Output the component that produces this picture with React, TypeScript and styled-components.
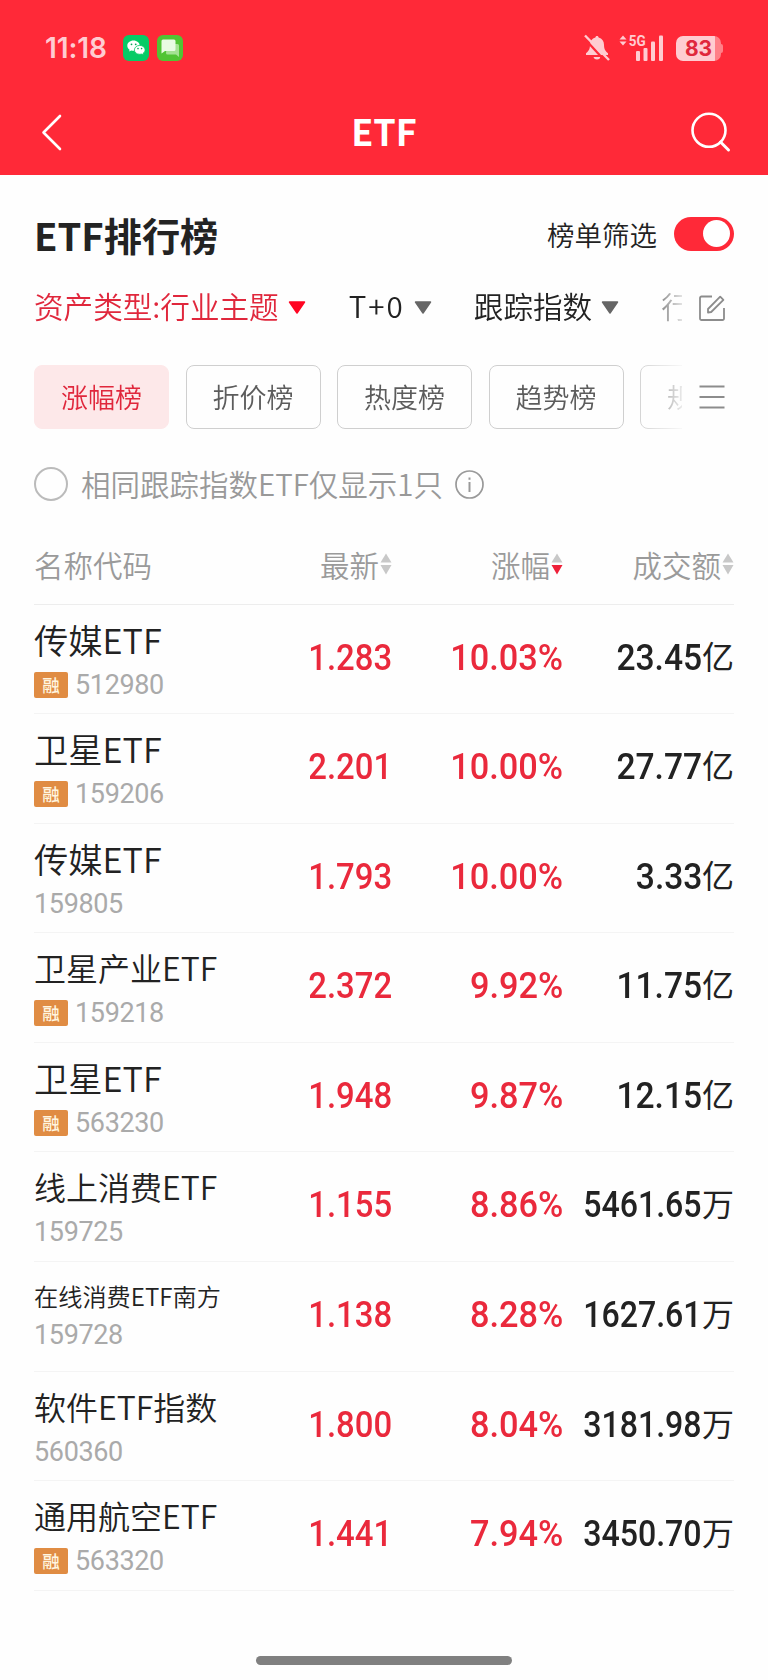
import React from "react";
import styled, { createGlobalStyle } from "styled-components";

const Global = createGlobalStyle`
  * { box-sizing: border-box; }
  body {
    margin: 0;
    background: #fefefe;
    font-family: "Noto Sans CJK SC", "Noto Sans", sans-serif;
    font-weight: 350;
    -webkit-font-smoothing: antialiased;
  }
`;

const Page = styled.div`
  width: 768px;
  height: 1680px;
  display: flex;
  flex-direction: column;
  overflow: hidden;
  background: #fefefe;
`;

const Header = styled.header`
  height: 174.5px;
  flex: none;
  background: #ff2938;
  color: #fff;
`;

const StatusBar = styled.div`
  height: 96px;
  padding: 0 45px 0 45px;
  display: flex;
  align-items: center;
  color: #ffccd1;
`;

const Clock = styled.span`
  font: 600 28px/30px Inter, sans-serif;
  letter-spacing: -0.1px;
  width: 78px;
`;

const AppIcons = styled.div`
  display: flex;
  gap: 8px;
  flex: 1;
`;

const StatusRight = styled.div`
  display: flex;
  align-items: center;
`;

const Battery = styled.div`
  display: flex;
  align-items: center;
  margin-left: 11px;
`;

const BatteryBody = styled.div`
  width: 45px;
  height: 25px;
  border-radius: 7px;
  background: linear-gradient(90deg, #ffccd1 0 39px, #ff8088 39px);
  color: #e0283c;
  font: 700 21px/26px Inter, sans-serif;
  text-align: center;
`;

const BatteryTip = styled.div`
  width: 2px;
  height: 9px;
  border-radius: 0 2px 2px 0;
  background: #ff8088;
`;

const NavBar = styled.div`
  height: 72px;
  padding: 0 37px 0 40px;
  display: flex;
  align-items: center;
  justify-content: space-between;
`;

const NavTitle = styled.h1`
  margin: 0;
  padding: 0 3px 4px 0;
  font-size: 36px;
  line-height: 40px;
  font-weight: 700;
`;

const NavSlot = styled.div<{ $end?: boolean }>`
  width: 60px;
  display: flex;
  justify-content: ${(p) => (p.$end ? "flex-end" : "flex-start")};
`;

const Main = styled.main`
  padding: 0 34px;
`;

const TitleRow = styled.div`
  height: 88px;
  padding-top: 32px;
  display: flex;
  align-items: center;
  justify-content: space-between;
`;

const Title = styled.h2`
  margin: 0;
  font-size: 38.2px;
  line-height: 50px;
  font-weight: 700;
  color: #232323;
`;

const ToggleLabel = styled.label`
  display: flex;
  align-items: center;
  gap: 17px;
  margin-bottom: 2px;
  font-size: 27.5px;
  line-height: 32px;
  color: #222;
`;

const Toggle = styled.span`
  width: 60px;
  height: 34px;
  padding: 3px 4px;
  border-radius: 17px;
  background: #ff2938;
  display: flex;
  justify-content: flex-end;
`;

const Knob = styled.span`
  width: 27px;
  height: 27px;
  border-radius: 50%;
  background: #fff;
`;

const ScrollRow = styled.div<{ $h: number }>`
  height: ${(p) => p.$h}px;
  display: flex;
  align-items: center;
  padding-right: 9px;
`;

const Scroller = styled.div`
  width: 648px;
  height: 68px;
  display: flex;
  align-items: center;
  overflow: hidden;
  mask-image: linear-gradient(90deg, #000 600px, transparent 655px);
`;

const RowAction = styled.div`
  flex: 1;
  display: flex;
  justify-content: flex-end;
`;

const Filter = styled.span<{ $active?: boolean; $gap: number; $spacing?: number }>`
  flex: none;
  display: flex;
  align-items: center;
  gap: 9px;
  margin-right: ${(p) => p.$gap}px;
  font-size: 29.6px;
  line-height: 44px;
  letter-spacing: ${(p) => p.$spacing ?? 0}px;
  color: ${(p) => (p.$active ? "#e0273c" : "#222")};
`;

const FilterText = styled.span`
  margin-top: -3px;
`;

const Tab = styled.span<{ $active?: boolean }>`
  flex: none;
  width: 135px;
  height: 64px;
  margin-right: 16.5px;
  border-radius: 8px;
  border: 1px solid ${(p) => (p.$active ? "#fde8e9" : "#cfcfcf")};
  background: ${(p) => (p.$active ? "#fde8e9" : "transparent")};
  color: ${(p) => (p.$active ? "#e0273c" : "#5c5c5c")};
  font-size: 27px;
  line-height: 62px;
  text-align: center;
`;

const OptionRow = styled.div`
  height: 87px;
  display: flex;
  align-items: center;
  color: #999;
  font-size: 29.5px;
  line-height: 40px;
`;

const Radio = styled.span`
  width: 34px;
  height: 34px;
  border: 2px solid #bbb;
  border-radius: 50%;
  margin-right: 13px;
`;

const OptionText = styled.span`
  margin: -3px 12px 0 0;
`;

const columns = "grid-template-columns: 200px 158px 171px 171px;";

const TableHead = styled.div`
  height: 77.2px;
  display: grid;
  ${columns}
  align-items: center;
  font-size: 29.5px;
  line-height: 40px;
  color: #9a9a9a;
  padding-bottom: 3px;
  border-bottom: 1px solid #ededed;
`;

const HeadCell = styled.div<{ $right?: boolean }>`
  display: flex;
  align-items: center;
  gap: 1px;
  justify-content: ${(p) => (p.$right ? "flex-end" : "flex-start")};
`;

const Row = styled.div`
  height: 109.55px;
  display: grid;
  ${columns}
  border-bottom: 1px solid #f4f4f4;
`;

const NameCell = styled.div`
  padding-top: 13px;
  white-space: nowrap;
`;

const Name = styled.div<{ $size: number }>`
  font-size: ${(p) => p.$size}px;
  line-height: 42px;
  color: #222;
`;

const CodeLine = styled.div<{ $up?: boolean }>`
  display: flex;
  align-items: center;
  gap: 7px;
  height: 26px;
  margin-top: ${(p) => (p.$up ? 5 : 12)}px;
`;

const Badge = styled.span`
  width: 34px;
  height: 26px;
  border-radius: 2px;
  background: #e08c43;
  color: #fff6e0;
  font-size: 17.5px;
  line-height: 25px;
  font-weight: 500;
  text-align: center;
`;

const Code = styled.span`
  font: 400 27px/26px Roboto, sans-serif;
  letter-spacing: -0.35px;
  color: #aaa;
`;

const Num = styled.div<{ $dark?: boolean; $scale: number }>`
  display: flex;
  align-items: center;
  justify-content: flex-end;
  height: 106px;
  white-space: nowrap;
  color: ${(p) => (p.$dark ? "#222" : "#ea293c")};
  font: 460 36.5px/40px Roboto, sans-serif;

  span {
    transform: scaleX(${(p) => p.$scale});
    transform-origin: right center;
  }
`;

const Unit = styled.b`
  margin-top: -6px;
  font: 400 32px/40px "Noto Sans CJK SC", sans-serif;
`;

const HomeIndicator = styled.div`
  width: 256px;
  height: 9px;
  margin: auto auto 15px;
  border-radius: 5px;
  background: #808080;
`;

const Caret = ({ color }: { color: string }) => (
  <svg width="18" height="14" viewBox="0 0 18 14">
    <path d="M1.5 1h15L9 12z" fill={color} stroke={color} strokeWidth="1.5" strokeLinejoin="round" />
  </svg>
);

const Sort = ({ desc }: { desc?: boolean }) => (
  <svg width="12" height="22" viewBox="0 0 12 22">
    <path d="M6 .5l5.5 9H.5z" fill="#c8c8c8" />
    <path d="M6 21.5l5.5-9.5H.5z" fill={desc ? "#ee2039" : "#c8c8c8"} />
  </svg>
);

const WeChat = () => (
  <svg width="26" height="26" viewBox="0 0 26 26">
    <rect width="26" height="26" rx="6" fill="#06cb66" />
    <path d="M10.5 5.6C7 5.600 4.300 7.900 4.300 10.700c0 1.600.9 3 2.300 4l-.5 1.900 2.100-1.100c.7.2 1.500.3 2.300.3 3.500 0 6.200-2.300 6.200-5.100s-2.700-5.100-6.200-5.100z" fill="#fff" />
    <path d="M16.800 10.400c-3.100 0-5.400 2-5.400 4.500s2.300 4.400 5.400 4.400c.6 0 1.200-.1 1.800-.2l1.900 1-.5-1.700c1.300-.8 2.100-2.100 2.100-3.500 0-2.500-2.400-4.500-5.300-4.500z" fill="#fff" stroke="#06cb66" strokeWidth=".8" />
    <g fill="#06a757">
      <circle cx="8.500" cy="9.300" r=".9" />
      <circle cx="12.700" cy="9.300" r=".9" />
      <circle cx="15" cy="13.600" r=".8" />
      <circle cx="18.600" cy="13.600" r=".8" />
    </g>
  </svg>
);

const Messages = () => (
  <svg width="26" height="26" viewBox="0 0 26 26">
    <rect width="26" height="26" rx="6" fill="#51c434" />
    <path d="M10 9h10.500q1.500 0 1.500 1.500V22l-3-2.500h-8.500Q9 19.500 9 18z" fill="#a5e293" />
    <path d="M6 4.500h11q1.500 0 1.500 1.500v8.500q0 1.500-1.500 1.500H8l-3.500 2.500V6q0-1.500 1.500-1.500z" fill="#e9fbe4" />
  </svg>
);

const BellSlot = styled.div`
  display: flex;
  margin-right: 9px;
`;

const MutedBell = () => (
  <svg width="26" height="28" viewBox="0 0 26 28">
    <path d="M13 2c-1 0-1.500.7-1.600 1.500C7.800 4.400 6 7.300 6 10.800c0 4.500-1.500 6.500-4 8.500V21h22v-1.700c-2.500-2-4-4-4-8.500 0-3.500-1.800-6.400-5.400-7.300C14.500 2.700 14 2 13 2zM9.500 23h7c-.5 1.700-1.800 2.500-3.500 2.500S10 24.700 9.500 23z" fill="#ffccd1" />
    <path d="M-.5 3.500L22 28" stroke="#ff2938" strokeWidth="2.200" />
    <path d="M1 1.500l24 24.500" stroke="#ffccd1" strokeWidth="2.400" />
  </svg>
);

const Signal = () => (
  <svg width="46" height="28" viewBox="0 0 46 28">
    <g fill="#ffccd1">
      <path d="M4 1.500l3.500 4H.5zM4 11.500l3.500-4H.5z" />
      <rect x="17" y="17" width="4" height="10" rx="1" />
      <rect x="24.500" y="14" width="4" height="13" rx="1" />
      <rect x="32" y="7.500" width="4" height="19.500" rx="1" />
      <rect x="40" y="1.500" width="4" height="25.500" rx="1" />
      <text x="9.800" y="12" fontFamily="Roboto" fontWeight="700" fontSize="15.500" textLength="17" lengthAdjust="spacingAndGlyphs">5G</text>
    </g>
  </svg>
);

const Back = () => (
  <svg width="24" height="38" viewBox="0 0 24 38">
    <path d="M20 3L3.500 19.500 20 36" fill="none" stroke="#fff" strokeWidth="2.600" strokeLinecap="round" strokeLinejoin="round" />
  </svg>
);

const Search = () => (
  <svg width="42" height="42" viewBox="0 0 42 42">
    <circle cx="20" cy="19.300" r="16.500" fill="none" stroke="#fff" strokeWidth="2.600" />
    <path d="M31.500 31l8 8" stroke="#fff" strokeWidth="3" strokeLinecap="round" />
  </svg>
);

const Edit = () => (
  <svg width="26" height="26" viewBox="0 0 26 26" fill="none" stroke="#8c8c8c" strokeWidth="1.800">
    <path d="M13 1.500H2.500a1.500 1.500 0 0 0-1.500 1.500v20.500a1.500 1.500 0 0 0 1.500 1.500H23.500a1.500 1.500 0 0 0 1.500-1.500V13" />
    <path d="M9 17.500v-3.500L21.200 1.700l3.200 3.200L12.200 17z" strokeLinejoin="round" />
  </svg>
);

const Menu = () => (
  <svg width="26" height="26" viewBox="0 0 26 26" stroke="#8c8c8c" strokeWidth="1.800">
    <path d="M.5 2.500h25M.5 13h25M.5 23.500h25" />
  </svg>
);

const Info = () => (
  <svg width="29" height="29" viewBox="0 0 29 29" fill="none" stroke="#999" strokeWidth="1.700">
    <circle cx="14.500" cy="14.500" r="13.500" />
    <path d="M14.500 12v10M14.500 7.500v2.300" strokeWidth="2" />
  </svg>
);

type Fund = { name: string; size?: number; code: string; margin?: boolean; price: string; pct: string; amount: string; unit: string };

const funds: Fund[] = [
  { name: "传媒ETF", size: 34.3, code: "512980", margin: true, price: "1.283", pct: "10.03%", amount: "23.45", unit: "亿" },
  { name: "卫星ETF", size: 34.3, code: "159206", margin: true, price: "2.201", pct: "10.00%", amount: "27.77", unit: "亿" },
  { name: "传媒ETF", size: 34.3, code: "159805", price: "1.793", pct: "10.00%", amount: "3.33", unit: "亿" },
  { name: "卫星产业ETF", code: "159218", margin: true, price: "2.372", pct: "9.92%", amount: "11.75", unit: "亿" },
  { name: "卫星ETF", size: 34.3, code: "563230", margin: true, price: "1.948", pct: "9.87%", amount: "12.15", unit: "亿" },
  { name: "线上消费ETF", code: "159725", price: "1.155", pct: "8.86%", amount: "5461.65", unit: "万" },
  { name: "在线消费ETF南方", size: 24.2, code: "159728", price: "1.138", pct: "8.28%", amount: "1627.61", unit: "万" },
  { name: "软件ETF指数", code: "560360", price: "1.800", pct: "8.04%", amount: "3181.98", unit: "万" },
  { name: "通用航空ETF", code: "563320", margin: true, price: "1.441", pct: "7.94%", amount: "3450.70", unit: "万" },
];

export default function App() {
  return (
    <Page>
      <Global />
      <Header>
        <StatusBar>
          <Clock>11:18</Clock>
          <AppIcons>
            <WeChat />
            <Messages />
          </AppIcons>
          <StatusRight>
            <BellSlot><MutedBell /></BellSlot>
            <Signal />
            <Battery>
              <BatteryBody>83</BatteryBody>
              <BatteryTip />
            </Battery>
          </StatusRight>
        </StatusBar>
        <NavBar>
          <NavSlot><Back /></NavSlot>
          <NavTitle>ETF</NavTitle>
          <NavSlot $end><Search /></NavSlot>
        </NavBar>
      </Header>
      <Main>
        <TitleRow>
          <Title>ETF排行榜</Title>
          <ToggleLabel>
            榜单筛选
            <Toggle><Knob /></Toggle>
          </ToggleLabel>
        </TitleRow>
        <ScrollRow $h={90}>
          <Scroller>
            <Filter $active $gap={43}><FilterText>资产类型:行业主题</FilterText><Caret color="#ff0522" /></Filter>
            <Filter $gap={42} $spacing={2}><FilterText>T+0</FilterText><Caret color="#666" /></Filter>
            <Filter $gap={42}><FilterText>跟踪指数</FilterText><Caret color="#666" /></Filter>
            <Filter $gap={0}><FilterText>行</FilterText></Filter>
          </Scroller>
          <RowAction><Edit /></RowAction>
        </ScrollRow>
        <ScrollRow $h={88}>
          <Scroller>
            <Tab $active>涨幅榜</Tab>
            <Tab>折价榜</Tab>
            <Tab>热度榜</Tab>
            <Tab>趋势榜</Tab>
            <Tab>规模榜</Tab>
          </Scroller>
          <RowAction><Menu /></RowAction>
        </ScrollRow>
        <OptionRow>
          <Radio />
          <OptionText>相同跟踪指数ETF仅显示1只</OptionText>
          <Info />
        </OptionRow>
        <TableHead>
          <HeadCell>名称代码</HeadCell>
          <HeadCell $right>最新<Sort /></HeadCell>
          <HeadCell $right>涨幅<Sort desc /></HeadCell>
          <HeadCell $right>成交额<Sort /></HeadCell>
        </TableHead>
        {funds.map((f) => (
          <Row key={f.code}>
            <NameCell>
              <Name $size={f.size ?? 32}>{f.name}</Name>
              <CodeLine $up={f.size === 24.2}>
                {f.margin && <Badge>融</Badge>}
                <Code>{f.code}</Code>
              </CodeLine>
            </NameCell>
            <Num $scale={0.9}><span>{f.price}</span></Num>
            <Num $scale={0.94}><span>{f.pct}</span></Num>
            <Num $dark $scale={f.unit === "万" ? 0.88 : 0.92}><span>{f.amount}</span><Unit>{f.unit}</Unit></Num>
          </Row>
        ))}
      </Main>
      <HomeIndicator />
    </Page>
  );
}
